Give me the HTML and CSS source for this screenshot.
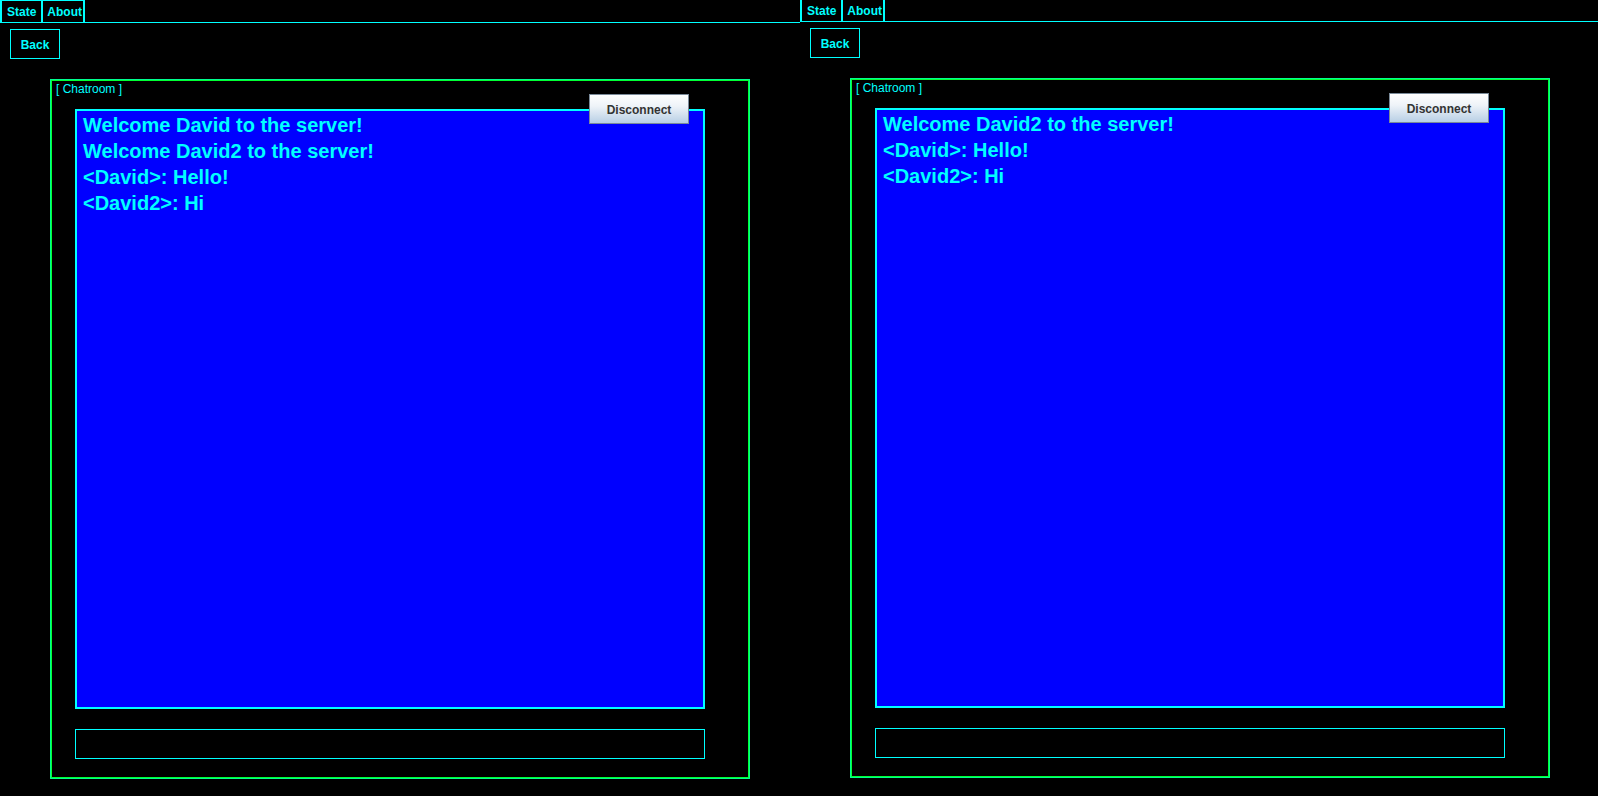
FILE: index.html
```html
<!DOCTYPE html>
<html>
<head>
<meta charset="utf-8">
<link rel="stylesheet" href="styles.css">
</head>
<body>
<div class="screen">
  <div class="panel">
    <div class="tabbar">
      <div class="tab tab-first">State</div>
      <div class="tab tab-last">About</div>
    </div>
    <div class="back">Back</div>
    <div class="chatroom">
      <div class="legend">[ Chatroom ]</div>
      <div class="messages">
        <div class="msg">Welcome David to the server!</div>
        <div class="msg">Welcome David2 to the server!</div>
        <div class="msg">&lt;David&gt;: Hello!</div>
        <div class="msg">&lt;David2&gt;: Hi</div>
      </div>
      <div class="input"></div>
      <div class="disconnect">Disconnect</div>
    </div>
  </div>
  <div class="panel panel-second">
    <div class="tabbar">
      <div class="tab tab-first">State</div>
      <div class="tab tab-last">About</div>
    </div>
    <div class="back">Back</div>
    <div class="chatroom">
      <div class="legend">[ Chatroom ]</div>
      <div class="messages">
        <div class="msg">Welcome David2 to the server!</div>
        <div class="msg">&lt;David&gt;: Hello!</div>
        <div class="msg">&lt;David2&gt;: Hi</div>
      </div>
      <div class="input"></div>
      <div class="disconnect">Disconnect</div>
    </div>
  </div>
</div>
</body>
</html>
```
FILE: styles.css
```css
html, body {
  margin: 0;
  padding: 0;
  background: #000;
  overflow: hidden;
  width: 1598px;
  height: 796px;
}
body {
  font-family: "Liberation Sans", Arial, sans-serif;
  color: #00ffff;
}
.screen {
  display: flex;
  width: 1598px;
  height: 796px;
  overflow: hidden;
}
.panel {
  width: 800px;
  flex: 0 0 800px;
  height: 797px;
}
.panel-second {
  margin-top: -1px;
}
.tabbar {
  display: flex;
  height: 23px;
  box-sizing: border-box;
  border-bottom: 1px solid #00ffff;
}
.tab {
  height: 22px;
  box-sizing: border-box;
  border-top: 1px solid #00ffff;
  border-left: 1px solid #00ffff;
  border-right: 1px solid #00ffff;
  font-size: 12px;
  font-weight: bold;
  line-height: 21px;
  padding-top: 1px;
}
.tab-first {
  border-left-width: 2px;
  padding-left: 5px;
  padding-right: 5px;
}
.tab-last {
  border-right-width: 2px;
  padding-left: 4px;
  padding-right: 1px;
}
.back {
  margin: 6px 0 0 10px;
  width: 50px;
  height: 30px;
  box-sizing: border-box;
  border: 1px solid #00ffff;
  font-size: 12px;
  font-weight: bold;
  line-height: 28px;
  padding-top: 1px;
  text-align: center;
}
.chatroom {
  position: relative;
  margin: 20px 0 0 50px;
  width: 700px;
  height: 700px;
  box-sizing: border-box;
  border: 1px solid #00ff90;
  box-shadow: inset 0 0 0 1px #00ff33;
  padding: 1px;
}
.legend {
  font-size: 12px;
  line-height: 14px;
  margin: 1px 0 0 4px;
}
.messages {
  margin: 13px 0 0 23px;
  width: 630px;
  height: 600px;
  box-sizing: border-box;
  border: 2px solid #00ffff;
  background: #0000ff;
  padding: 1px 6px 0;
}
.msg {
  font-size: 20px;
  font-weight: bold;
  line-height: 26px;
  white-space: nowrap;
}
.input {
  margin: 20px 0 0 23px;
  width: 630px;
  height: 30px;
  box-sizing: border-box;
  border: 1px solid #00ffff;
}
.disconnect {
  position: absolute;
  left: 538px;
  top: 14px;
  width: 100px;
  height: 30px;
  box-sizing: border-box;
  border: 1px solid #7a8a99;
  background: linear-gradient(to bottom, #ffffff 0%, #eef3f8 40%, #b8cfe5 100%);
  color: #333333;
  font-size: 12px;
  font-weight: bold;
  line-height: 28px;
  padding-top: 1px;
  text-align: center;
}
```
